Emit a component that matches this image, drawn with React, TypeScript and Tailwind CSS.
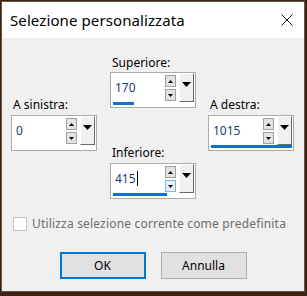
import React from 'react';

const FONT = "font-['Noto_Sans',sans-serif]";

const Tri = ({ dir, w, h }: { dir: 'up' | 'down'; w: number; h: number }) => (
  <svg width={w} height={h} viewBox={`0 0 ${w} ${h}`}>
    {dir === 'up' ? (
      <polygon points={`0,${h} ${w / 2},0 ${w},${h}`} fill="#000" />
    ) : (
      <polygon points={`0,0 ${w},0 ${w / 2},${h}`} fill="#000" />
    )}
  </svg>
);

interface SpinProps {
  value: string;
  bar: number; // bar width in px, 0 = none
  caret?: boolean;
  downHot?: boolean;
}

// numeric field with spin arrows + dropdown, blue bar shows the value
const SpinField = ({ value, bar, caret, downHot }: SpinProps) => (
  <div className="w-[86px] h-[36px] border border-[#ababab] bg-white flex flex-col">
    <div className="h-[29px] flex items-center">
      <div className="flex-1 pl-[4px] flex items-center text-[12px] text-[#1b3c74]">
        <span>{value}</span>
        {caret && <span className="w-px h-[15px] bg-black ml-[1px]" />}
      </div>
      <div className="flex flex-col gap-[2px] mr-[3px] self-start mt-[2px]">
        <div className="w-[11px] h-[12px] border border-[#a0a0a0] bg-[#e3e3e3] flex items-center justify-center">
          <Tri dir="up" w={5} h={3} />
        </div>
        <div
          className={`w-[11px] h-[12px] border flex items-center justify-center ${
            downHot ? 'border-[#7fb4e4] bg-[#e5f1fb]' : 'border-[#a0a0a0] bg-[#e3e3e3]'
          }`}
        >
          <Tri dir="down" w={5} h={3} />
        </div>
      </div>
      <div className="w-[15px] h-[29px] mr-[1px] self-start bg-[#f0f0f0] border-t border-l border-t-white border-l-white border-r border-b border-r-[#6a6a6a] border-b-[#6a6a6a] flex justify-center pt-[8px]">
        <Tri dir="down" w={9} h={5} />
      </div>
    </div>
    <div className="pl-[2px] h-[3px]">
      {bar > 0 && <div className="h-[3px] bg-[#0e72d0]" style={{ width: bar }} />}
    </div>
  </div>
);

const Label = ({ children }: { children: React.ReactNode }) => (
  <div className="h-[16px] leading-[16px] text-[12px] text-black pl-[2px]">{children}</div>
);

export default function App() {
  return (
    <div className={`w-[307px] h-[296px] bg-[#3a2415] pl-[1px] pt-[1px] ${FONT}`}>
      <div className="w-[304px] h-[291px] border border-[#6b5444] bg-[#f0f0f0] flex flex-col">
        {/* title bar */}
        <div className="h-[36px] bg-white flex items-center justify-between pl-[8px] pr-[11px] shrink-0">
          <span className="text-[15px] text-black tracking-[0.1px]">Selezione personalizzata</span>
          <svg width="12" height="12" viewBox="0 0 12 12">
            <path d="M0.5 0.5 L11.5 11.5 M11.5 0.5 L0.5 11.5" stroke="#111" strokeWidth="1" />
          </svg>
        </div>

        {/* fields */}
        <div className="flex pl-[9px] h-[161px]">
          <div className="flex flex-col pt-[59px]">
            <Label>A sinistra:</Label>
            <div className="mt-[2px]">
              <SpinField value="0" bar={0} />
            </div>
          </div>
          <div className="flex flex-col pt-[17px] ml-[13px]">
            <Label>Superiore:</Label>
            <div className="mt-[1px]">
              <SpinField value="170" bar={21} />
            </div>
            <div className="mt-[37px]">
              <Label>Inferiore:</Label>
            </div>
            <div className="mt-[2px]">
              <SpinField value="415" bar={54} caret downHot />
            </div>
          </div>
          <div className="flex flex-col pt-[59px] ml-[12px]">
            <Label>A destra:</Label>
            <div className="mt-[2px]">
              <SpinField value="1015" bar={81} />
            </div>
          </div>
        </div>

        {/* default checkbox */}
        <div className="flex items-center pl-[11px] mt-[17px] h-[16px]">
          <div className="w-[14px] h-[14px] border border-[#c2c2c2] bg-white" />
          <span className="ml-[5px] text-[12px] text-[#6d6d6d] tracking-[0.18px]">Utilizza selezione corrente come predefinita</span>
        </div>

        {/* buttons */}
        <div className="flex justify-center gap-[15px] mt-[20px]">
          <button className="w-[86px] h-[27px] border-2 border-[#0078d7] bg-[#e1e1e1] text-[12px] text-black">OK</button>
          <button className="w-[86px] h-[27px] border border-[#adadad] bg-[#e1e1e1] text-[12px] text-black">Annulla</button>
        </div>
      </div>
    </div>
  );
}
